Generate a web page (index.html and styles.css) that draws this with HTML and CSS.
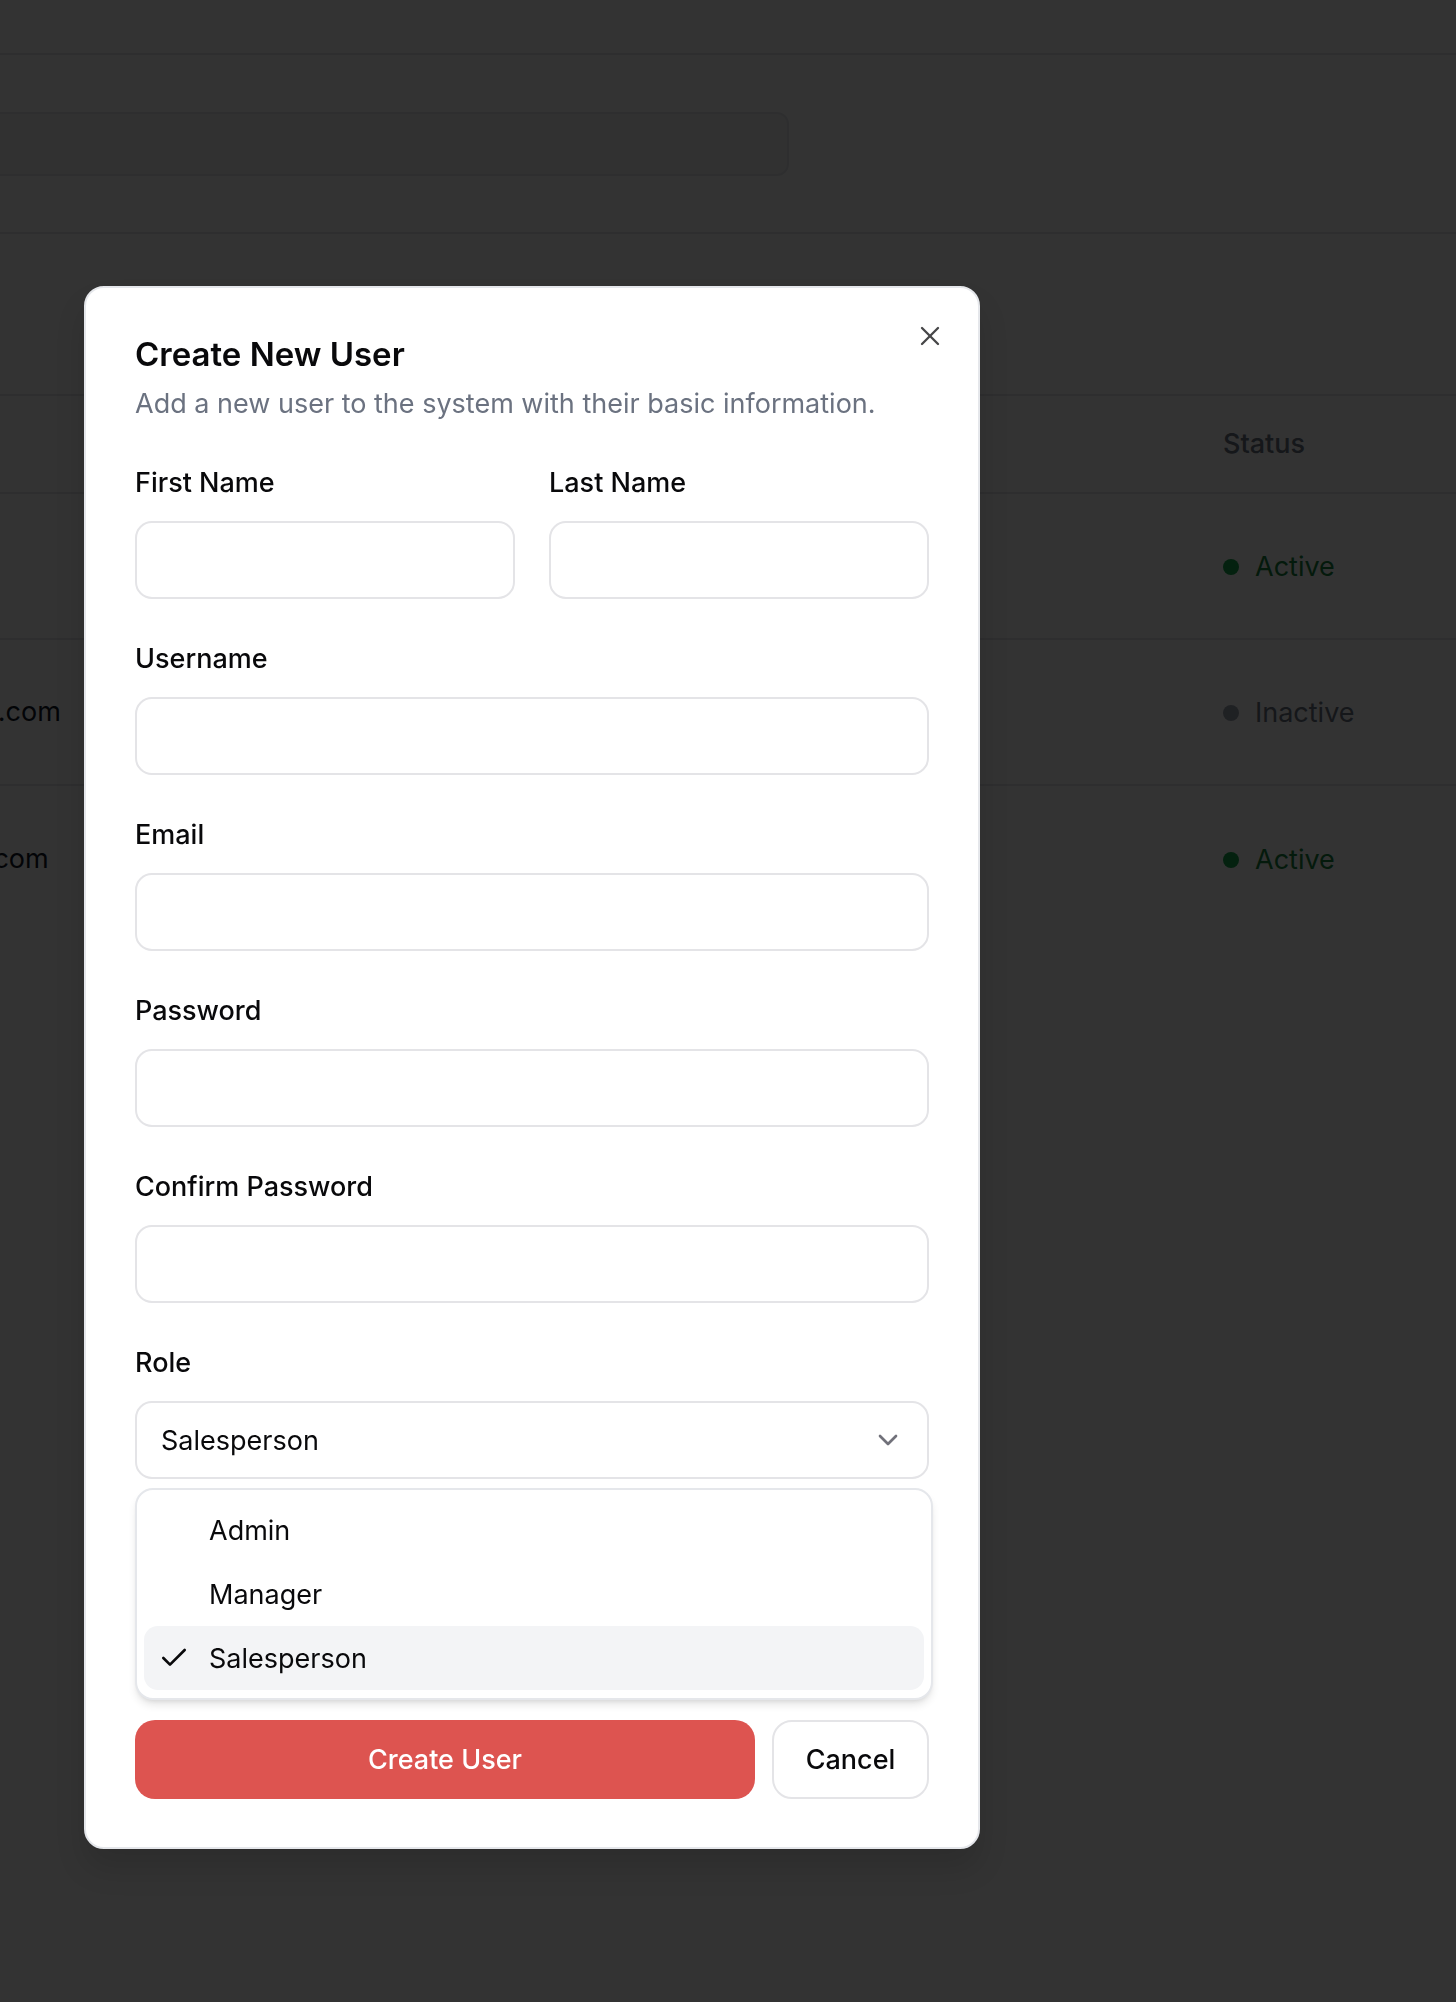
FILE: index.html
```html
<!DOCTYPE html>
<html lang="en">
<head>
<meta charset="utf-8">
<title>Users</title>
<link rel="stylesheet" href="styles.css">
</head>
<body>
<div class="canvas">
  <header class="topbar"></header>
  <section class="toolbar">
    <div class="search"></div>
  </section>
  <section class="table">
    <div class="tr th">
      <div class="td">Email</div>
      <div class="td">Role</div>
      <div class="td">Status</div>
    </div>
    <div class="tr">
      <div class="td email">john@email.com</div>
      <div class="td role">Admin</div>
      <div class="td"><span class="status active"><span class="dot"></span>Active</span></div>
    </div>
    <div class="tr">
      <div class="td email">sarah.wilson@email.com</div>
      <div class="td role">Manager</div>
      <div class="td"><span class="status inactive"><span class="dot"></span>Inactive</span></div>
    </div>
    <div class="tr last">
      <div class="td email">mike.brown@email.com</div>
      <div class="td role">Salesperson</div>
      <div class="td"><span class="status active"><span class="dot"></span>Active</span></div>
    </div>
  </section>
</div>

<div class="overlay"></div>

<div class="dialog" role="dialog" aria-labelledby="dlg-title">
  <button class="close" aria-label="Close">
    <svg viewBox="0 0 24 24" width="32" height="32" fill="none" stroke="currentColor" stroke-width="1.75" stroke-linecap="round" stroke-linejoin="round"><path d="M18 6 6 18"/><path d="m6 6 12 12"/></svg>
  </button>
  <h2 class="title" id="dlg-title">Create New User</h2>
  <p class="desc">Add a new user to the system with their basic information.</p>

  <form class="form">
    <div class="row2">
      <div class="field">
        <label class="label">First Name</label>
        <div class="input"></div>
      </div>
      <div class="field">
        <label class="label">Last Name</label>
        <div class="input"></div>
      </div>
    </div>
    <div class="field">
      <label class="label">Username</label>
      <div class="input"></div>
    </div>
    <div class="field">
      <label class="label">Email</label>
      <div class="input"></div>
    </div>
    <div class="field">
      <label class="label">Password</label>
      <div class="input"></div>
    </div>
    <div class="field">
      <label class="label">Confirm Password</label>
      <div class="input"></div>
    </div>
    <div class="field last">
      <label class="label">Role</label>
      <div class="select">
        <span>Salesperson</span>
        <svg class="chev" viewBox="0 0 24 24" width="32" height="32" fill="none" stroke="currentColor" stroke-width="2" stroke-linecap="round" stroke-linejoin="round"><path d="m6 9 6 6 6-6"/></svg>
      </div>
      <div class="menu">
        <div class="item">Admin</div>
        <div class="item">Manager</div>
        <div class="item selected">
          <svg class="check" viewBox="0 0 24 24" width="32" height="32" fill="none" stroke="currentColor" stroke-width="2" stroke-linecap="round" stroke-linejoin="round"><path d="M20 6 9 17l-5-5"/></svg>
          Salesperson
        </div>
      </div>
    </div>

    <div class="actions">
      <button type="button" class="btn primary">Create User</button>
      <button type="button" class="btn outline">Cancel</button>
    </div>
  </form>
</div>
</body>
</html>
```

FILE: styles.css
```css
* {
  box-sizing: border-box;
  margin: 0;
  padding: 0;
}

html, body {
  width: 1456px;
  height: 2002px;
  overflow: hidden;
}

body {
  font-family: Inter, "Noto Sans", sans-serif;
  background: #ffffff;
  color: #09090b;
  position: relative;
}

/* ---------- underlying page (horizontally scrolled) ---------- */
.canvas {
  margin-left: -280px;
  width: 1736px;
}

.topbar {
  height: 55px;
  border-bottom: 2px solid #e5e7eb;
}

.toolbar {
  padding: 57px 24px 56px;
  border-bottom: 2px solid #e5e7eb;
}

.search {
  width: 1045px;
  height: 64px;
  border: 2px solid #e5e7eb;
  border-radius: 12px;
  background: #f4f4f5;
}

.table {
  margin-top: 160px;
  border-top: 2px solid #e5e7eb;
  font-size: 27px;
}

.tr {
  display: grid;
  grid-template-columns: 600px 1fr 233px;
  height: 146px;
  align-items: center;
  border-bottom: 2px solid #e5e7eb;
}

.tr.th {
  height: 98px;
  color: #6b7280;
  font-weight: 500;
}

.tr.last {
  border-bottom: none;
}

.td {
  padding-left: 24px;
  line-height: 38px;
  white-space: nowrap;
}

.tr .td:last-child {
  padding-left: 0;
}

.email {
  color: #111827;
}

.status {
  display: inline-flex;
  align-items: center;
  gap: 16px;
}

.dot {
  width: 16px;
  height: 16px;
  border-radius: 50%;
}

.status.active { color: #15803d; }
.status.active .dot { background: #16a34a; }
.status.inactive { color: #6b7280; }
.status.inactive .dot { background: #9ca3af; }

/* ---------- overlay & dialog ---------- */
.overlay {
  position: fixed;
  inset: 0;
  background: rgba(0, 0, 0, 0.8);
}

.dialog {
  position: absolute;
  left: 84px;
  top: 286px;
  width: 896px;
  background: #ffffff;
  border: 2px solid #e5e7eb;
  border-radius: 20px;
  padding: 50px 49px 48px;
  box-shadow: 0 20px 30px rgba(0, 0, 0, 0.12);
}

.close {
  position: absolute;
  top: 32px;
  right: 32px;
  width: 32px;
  height: 32px;
  border: none;
  background: transparent;
  color: #09090b;
  opacity: 0.75;
  display: flex;
}

.title {
  font-size: 33px;
  line-height: 33px;
  font-weight: 600;
  letter-spacing: 0;
  color: #09090b;
}

.desc {
  margin-top: 14px;
  font-size: 27px;
  line-height: 38px;
  color: #6b7280;
}

.form {
  margin-top: 46px;
}

.row2 {
  display: grid;
  grid-template-columns: 1fr 1fr;
  gap: 34px;
  margin-bottom: 46px;
}

.field {
  margin-bottom: 46px;
}

.row2 .field {
  margin-bottom: 0;
}

.field.last {
  margin-bottom: 0;
}

.label {
  display: block;
  font-size: 27px;
  line-height: 27px;
  font-weight: 500;
  color: #09090b;
  margin-bottom: 25px;
}

.input {
  height: 78px;
  border: 2px solid #e4e4e7;
  border-radius: 17px;
  background: #ffffff;
}

.select {
  height: 78px;
  border: 2px solid #e4e4e7;
  border-radius: 17px;
  display: flex;
  align-items: center;
  justify-content: space-between;
  padding: 0 23px 0 24px;
  font-size: 27px;
  color: #09090b;
}

.chev {
  color: #71717a;
  flex: none;
}

.menu {
  margin-top: 9px;
  width: calc(100% + 4px);
  border: 2px solid #e5e7eb;
  border-radius: 18px;
  background: #ffffff;
  padding: 8px 7px;
  box-shadow: 0 6px 10px -2px rgba(0, 0, 0, 0.12), 0 3px 5px -3px rgba(0, 0, 0, 0.1);
}

.item {
  position: relative;
  height: 64px;
  display: flex;
  align-items: center;
  padding-left: 65px;
  font-size: 27px;
  color: #09090b;
  border-radius: 14px;
}

.item.selected {
  background: #f3f4f6;
}

.check {
  position: absolute;
  left: 14px;
  top: 50%;
  margin-top: -16px;
}

.actions {
  margin-top: 20px;
  display: flex;
  gap: 17px;
}

.btn {
  height: 79px;
  border-radius: 20px;
  font-family: inherit;
  font-size: 27px;
  font-weight: 500;
}

.btn.primary {
  flex: 1;
  border: none;
  background: #dd5450;
  color: #ffffff;
}

.btn.outline {
  width: 157px;
  border: 2px solid #e4e4e7;
  background: #ffffff;
  color: #09090b;
}
```
